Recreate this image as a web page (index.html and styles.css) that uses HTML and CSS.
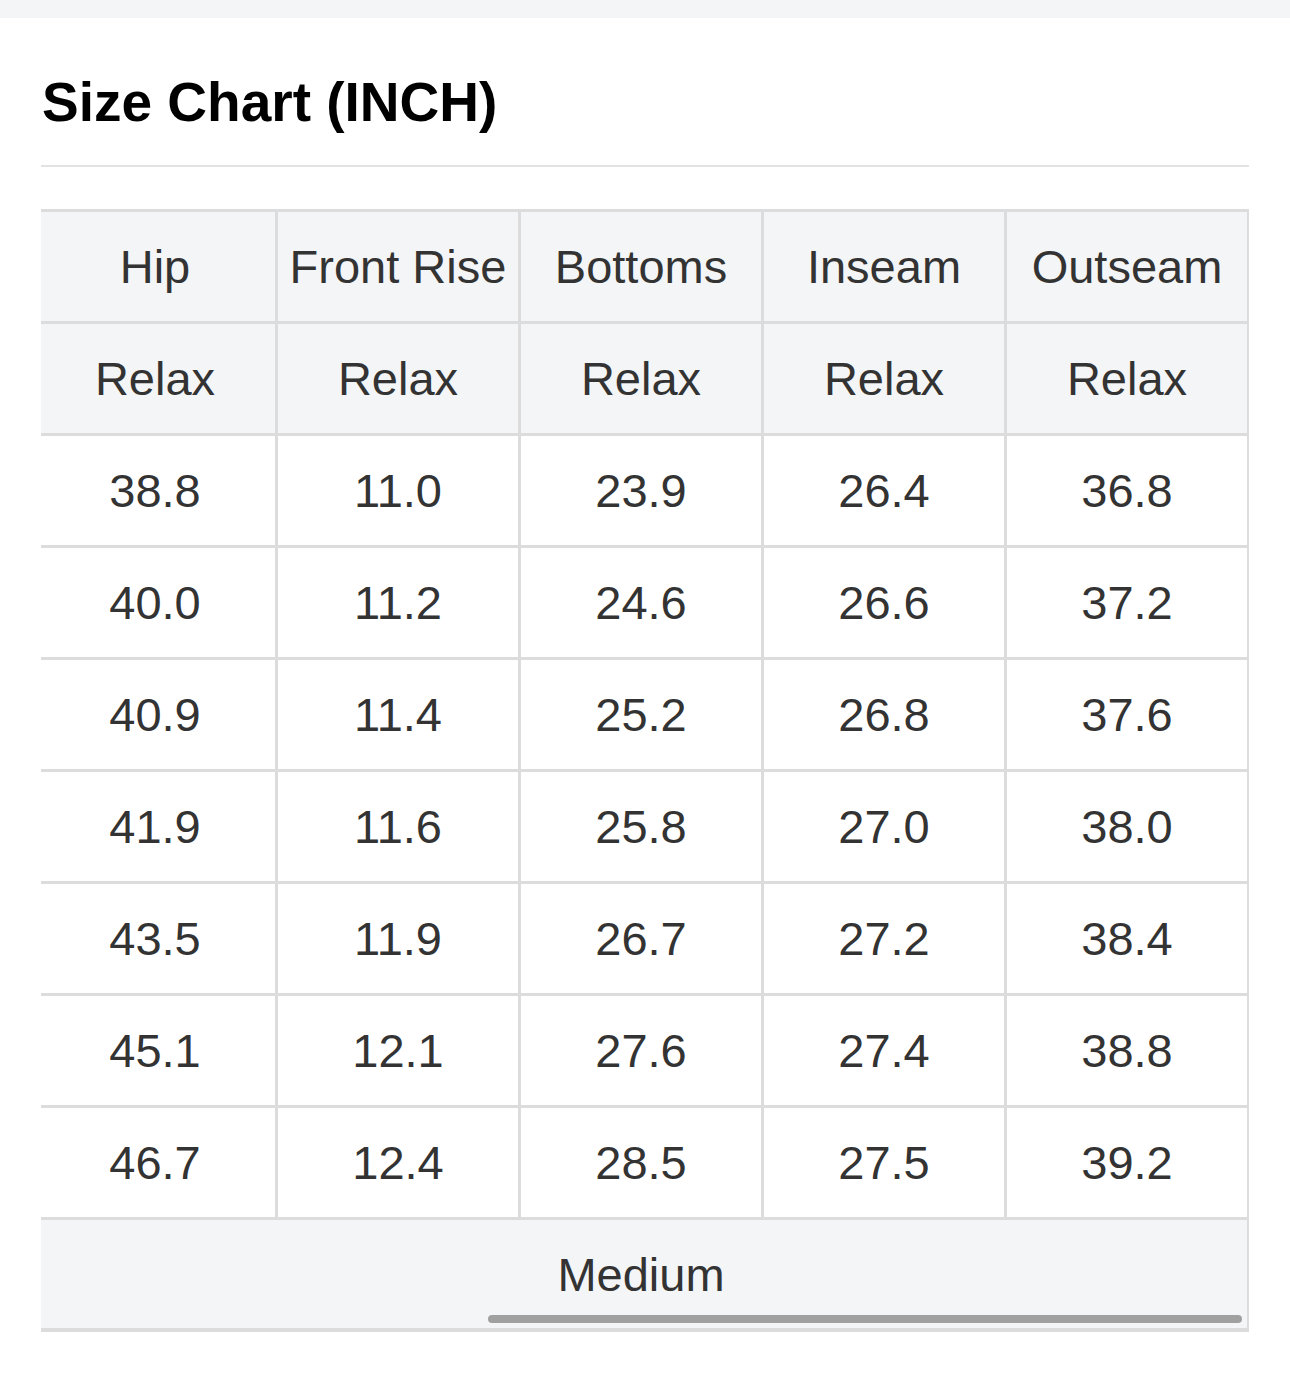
FILE: index.html
```html
<!DOCTYPE html>
<html lang="en">
<head>
<meta charset="utf-8">
<title>Size Chart (INCH)</title>
<link rel="stylesheet" href="styles.css">
</head>
<body>
<div class="topbar"></div>
<main class="content">
  <h1 class="title">Size Chart (INCH)</h1>
  <hr class="rule">
  <div class="chart">
    <div class="grid">
      <div class="cell head">Hip</div>
      <div class="cell head">Front Rise</div>
      <div class="cell head">Bottoms</div>
      <div class="cell head">Inseam</div>
      <div class="cell head">Outseam</div>

      <div class="cell head">Relax</div>
      <div class="cell head">Relax</div>
      <div class="cell head">Relax</div>
      <div class="cell head">Relax</div>
      <div class="cell head">Relax</div>

      <div class="cell">38.8</div><div class="cell">11.0</div><div class="cell">23.9</div><div class="cell">26.4</div><div class="cell">36.8</div>
      <div class="cell">40.0</div><div class="cell">11.2</div><div class="cell">24.6</div><div class="cell">26.6</div><div class="cell">37.2</div>
      <div class="cell">40.9</div><div class="cell">11.4</div><div class="cell">25.2</div><div class="cell">26.8</div><div class="cell">37.6</div>
      <div class="cell">41.9</div><div class="cell">11.6</div><div class="cell">25.8</div><div class="cell">27.0</div><div class="cell">38.0</div>
      <div class="cell">43.5</div><div class="cell">11.9</div><div class="cell">26.7</div><div class="cell">27.2</div><div class="cell">38.4</div>
      <div class="cell">45.1</div><div class="cell">12.1</div><div class="cell">27.6</div><div class="cell">27.4</div><div class="cell">38.8</div>
      <div class="cell">46.7</div><div class="cell">12.4</div><div class="cell">28.5</div><div class="cell">27.5</div><div class="cell">39.2</div>

      <div class="cell head footer">Medium</div>
    </div>
    <div class="scroll-thumb"></div>
  </div>
</main>
</body>
</html>
```
FILE: styles.css
```css
html, body {
  margin: 0;
  padding: 0;
  background: #ffffff;
  font-family: "Liberation Sans", Arial, Helvetica, sans-serif;
}

.topbar {
  height: 18px;
  background: #f4f5f6;
}

.content {
  padding: 0 41px;
}

.title {
  margin: 52px 0 0 1px;
  font-size: 55px;
  line-height: 64px;
  font-weight: 700;
  color: #000000;
}

.rule {
  margin: 31px 0 0 0;
  border: 0;
  height: 2px;
  background: #e2e2e2;
}

.chart {
  position: relative;
  margin-top: 42px;
  width: 1208px;
}

.grid {
  display: grid;
  grid-template-columns: 234px repeat(4, 240px);
  grid-auto-rows: 109px;
  gap: 3px;
  padding: 3px 3px 3px 0;
  background: #dcdcdc;
}

.cell {
  display: flex;
  align-items: center;
  justify-content: center;
  background: #ffffff;
  color: #333333;
  font-size: 47px;
  white-space: nowrap;
}

/* first column is partially scrolled out of view on its left side */
.cell:nth-child(5n+1) {
  padding-right: 6px;
}

.head {
  background: #f4f5f6;
}

.footer {
  grid-column: 1 / -1;
  height: 108px;
  padding-right: 6px;
}

.scroll-thumb {
  position: absolute;
  left: 447px;
  right: 7px;
  bottom: 9px;
  height: 8px;
  border-radius: 4px;
  background: #a0a0a0;
}
```
